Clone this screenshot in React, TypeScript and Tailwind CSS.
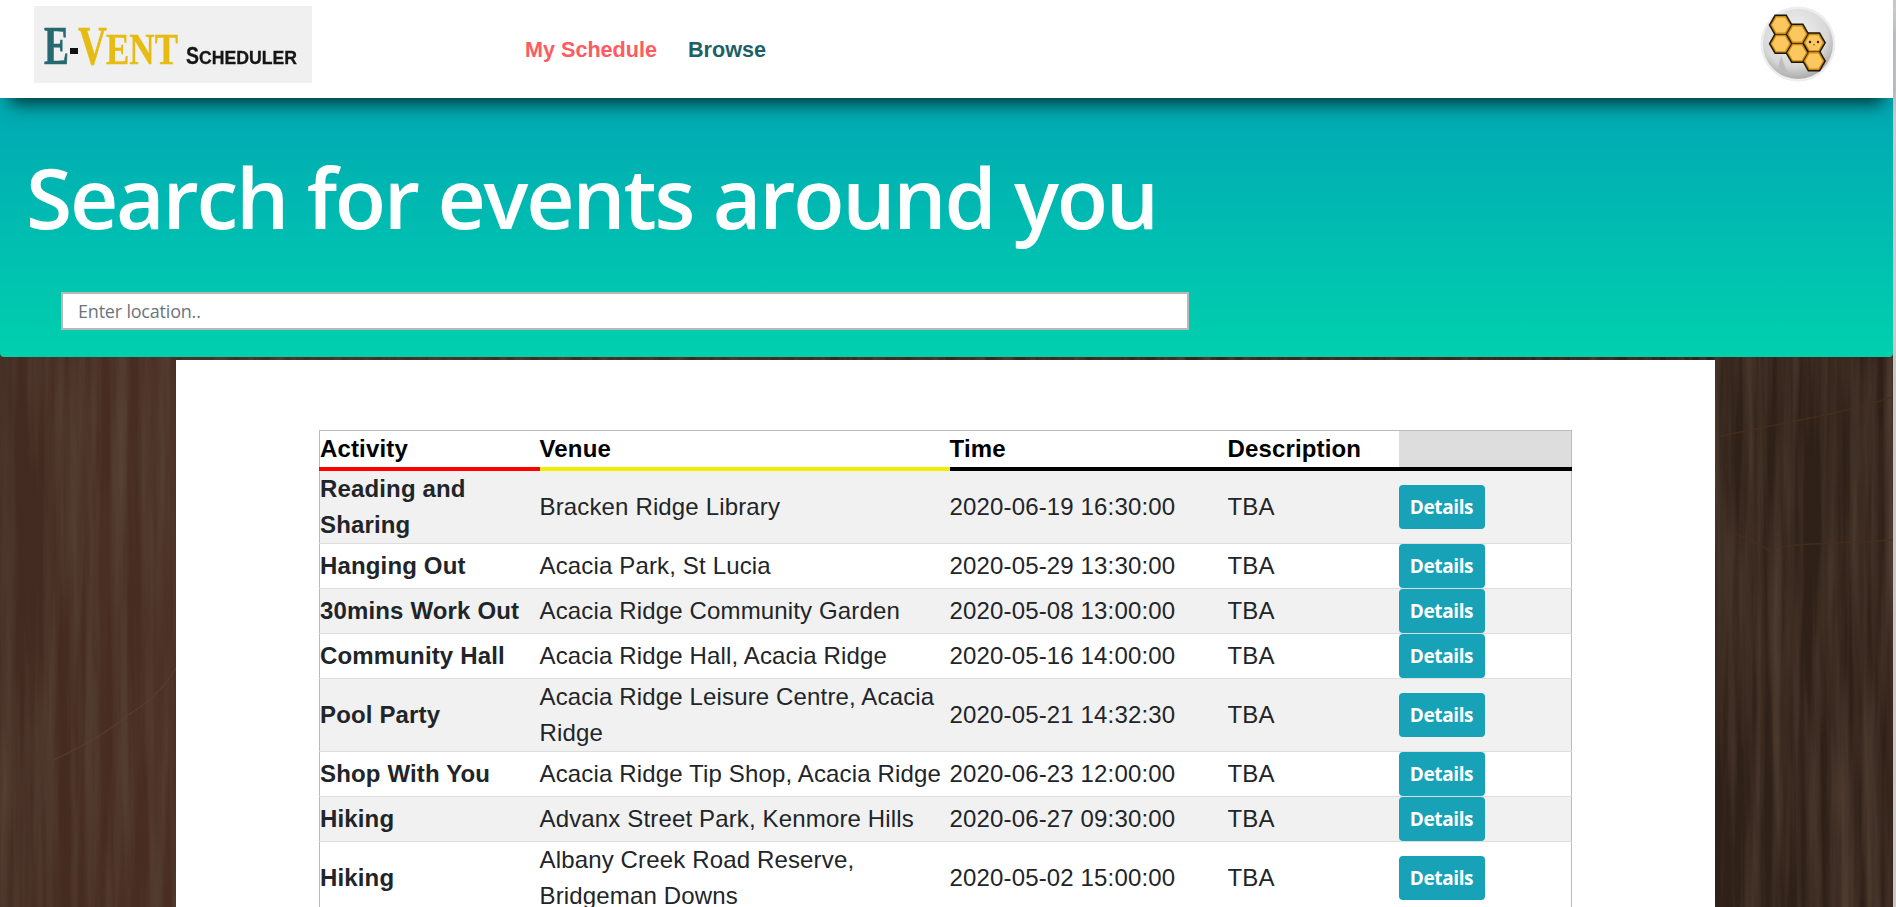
const rows: [string, string, string][] = [
  ["Reading and Sharing", "Bracken Ridge Library", "2020-06-19 16:30:00"],
  ["Hanging Out", "Acacia Park, St Lucia", "2020-05-29 13:30:00"],
  ["30mins Work Out", "Acacia Ridge Community Garden", "2020-05-08 13:00:00"],
  ["Community Hall", "Acacia Ridge Hall, Acacia Ridge", "2020-05-16 14:00:00"],
  ["Pool Party", "Acacia Ridge Leisure Centre, Acacia Ridge", "2020-05-21 14:32:30"],
  ["Shop With You", "Acacia Ridge Tip Shop, Acacia Ridge", "2020-06-23 12:00:00"],
  ["Hiking", "Advanx Street Park, Kenmore Hills", "2020-06-27 09:30:00"],
  ["Hiking", "Albany Creek Road Reserve, Bridgeman Downs", "2020-05-02 15:00:00"],
];

function Logo() {
  return (
    <svg width="278" height="77" viewBox="0 0 278 77" className="block bg-[#f0f0f0]">
      <g className="blur-[0.5px]">
        <text x="10" y="58" fontFamily="Liberation Serif" fontWeight="700" fontSize="54" fill="#266a70" stroke="#266a70" strokeWidth="0.7" textLength="25" lengthAdjust="spacingAndGlyphs">E</text>
        <rect x="36" y="42" width="8" height="6" fill="#111" />
        <text x="44" y="58" fontFamily="Liberation Serif" fontSize="54" fontWeight="700" fill="#e6bc12" stroke="#e6bc12" strokeWidth="0.4" textLength="29" lengthAdjust="spacingAndGlyphs">V</text>
        <text x="72" y="58" fontFamily="Liberation Serif" fontSize="45" fontWeight="700" fill="#e6bc12" stroke="#e6bc12" strokeWidth="0.4" textLength="72" lengthAdjust="spacingAndGlyphs">ENT</text>
        <text x="152" y="58" fontFamily="Liberation Sans" fontSize="23" fontWeight="700" fill="#161616" stroke="#161616" strokeWidth="0.3" textLength="13" lengthAdjust="spacingAndGlyphs">S</text>
        <text x="165" y="58" fontFamily="Liberation Sans" fontSize="18" fontWeight="700" fill="#161616" stroke="#161616" strokeWidth="0.3" textLength="98" lengthAdjust="spacingAndGlyphs">CHEDULER</text>
      </g>
    </svg>
  );
}

function Avatar() {
  const centers = [
    [20.7, 19],
    [37.3, 28],
    [54, 36.7],
    [20.7, 37.7],
    [37.3, 46.7],
    [54, 55],
  ];
  const hex = (cx: number, cy: number, r: number) =>
    [0, 60, 120, 180, 240, 300]
      .map((a) => `${cx + r * Math.cos((a * Math.PI) / 180)},${cy + r * Math.sin((a * Math.PI) / 180)}`)
      .join(" ");
  return (
    <svg width="76" height="76" viewBox="0 0 76 76" className="block">
      <defs>
        <radialGradient id="av" cx="0.45" cy="0.35" r="0.72">
          <stop offset="0" stopColor="#f2f2f2" />
          <stop offset="0.65" stopColor="#d8d8d8" />
          <stop offset="1" stopColor="#9a9a9a" />
        </radialGradient>
      </defs>
      <circle cx="38" cy="38" r="37.5" fill="#ededed" />
      <circle cx="38" cy="38" r="35" fill="url(#av)" />
      <path d="M17 66 L21 50 L28 68 Z" fill="#bdbdbd" />
      {centers.map(([x, y], i) => (
        <polygon key={"o" + i} points={hex(x, y, 12)} fill="#1c1608" />
      ))}
      {centers.map(([x, y], i) => (
        <polygon key={"m" + i} points={hex(x, y, 10.3)} fill="#c98a12" />
      ))}
      {centers.map(([x, y], i) => (
        <polygon key={"i" + i} points={hex(x, y, 8.7)} fill="#fdc75f" />
      ))}
      <circle cx="50" cy="36" r="1.2" fill="#222" />
      <circle cx="58" cy="36" r="1.2" fill="#222" />
      <path d="M53 38.5 q1 1 2 0" stroke="#222" strokeWidth="0.6" fill="none" />
    </svg>
  );
}

function Wood() {
  return (
    <svg className="absolute inset-0 h-full w-full" width="1893" height="554" viewBox="0 0 1893 554" preserveAspectRatio="none">
      <defs>
        <linearGradient id="wood" x1="0" x2="1" y1="0" y2="0">
          <stop offset="0" stopColor="#422a20" />
          <stop offset="0.093" stopColor="#492d22" />
          <stop offset="0.907" stopColor="#302118" />
          <stop offset="1" stopColor="#2f2017" />
        </linearGradient>
        <filter id="grain" x="0" y="0" width="100%" height="100%">
          <feTurbulence type="fractalNoise" baseFrequency="0.07 0.003" numOctaves="4" seed="23" />
          <feColorMatrix type="matrix" values="0 0 0 0 0.1  0 0 0 0 0.06  0 0 0 0 0.04  1.6 0 0 0 -0.55" />
        </filter>
      </defs>
      <rect width="1893" height="554" fill="url(#wood)" />
      <rect width="1893" height="554" filter="url(#grain)" />
      <path d="M54 407 C85 392 110 378 128 362 C145 352 165 335 176 315" fill="none" stroke="#5e3f2e" strokeWidth="1.5" opacity="0.7" />
      <g fill="none" stroke="#46301f" strokeWidth="1.5" opacity="0.7">
        <path d="M1717 84 C1770 72 1840 62 1893 44" />
        <path d="M1717 174 C1745 182 1765 195 1777 202" />
        <path d="M1777 194 C1810 190 1850 190 1893 187" />
      </g>
    </svg>
  );
}

export default function App() {
  return (
    <div className="flex h-[907px] w-[1896px] overflow-hidden bg-white font-['Liberation_Sans',Arial,sans-serif]">
      <div className="flex w-[1893px] shrink-0 flex-col">
        <header className="relative z-20 flex h-[98px] shrink-0 items-center bg-white pl-[34px] pr-[57px] shadow-[0_16px_16px_-10px_#02383c]">
          <div className="-mt-[10px]">
            <Logo />
          </div>
          <nav className="ml-[213px] mt-[2px] flex gap-[31px] text-[21.6px] font-bold">
            <span className="text-[#ff5a5f]">My Schedule</span>
            <span className="text-[#1f5f66]">Browse</span>
          </nav>
          <div className="ml-auto -mt-[11px]">
            <Avatar />
          </div>
        </header>
        <section className="relative z-10 h-[259px] shrink-0 rounded-b-[4px] bg-gradient-to-b from-[#00a8b3] to-[#00d0ad] pl-[26px]">
          <h1 className="pt-[41px] font-['Open_Sans',sans-serif] text-[84px] font-semibold leading-[116px] tracking-[-2.25px] text-white">
            Search for events around you
          </h1>
          <div className="ml-[35px] mt-[37px] w-[1128px]">
            <input
              readOnly
              placeholder="Enter location.."
              className="block h-[38px] w-full border-2 border-[#b8b8b8] bg-white px-[15px] font-['Open_Sans',sans-serif] text-[18px] tracking-[-0.2px] text-[#495057] outline-none placeholder:text-[#6c757d]"
            />
          </div>
        </section>
        <main className="relative -mt-[4px] min-h-0 flex-1 overflow-hidden pt-[7px]">
          <Wood />
          <div className="relative ml-[176px] h-full w-[1539px] bg-white pl-[143px] pt-[70px]">
            <table className="w-[1252px] table-fixed border-collapse border border-[#bbbbbb] text-[24px] leading-[36px] tracking-[0.15px] text-[#212529]">
              <colgroup>
                <col className="w-[220px]" />
                <col className="w-[410px]" />
                <col className="w-[278px]" />
                <col className="w-[171px]" />
                <col className="w-[173px]" />
              </colgroup>
              <thead>
                <tr className="text-left text-black">
                  <th className="h-[37px] border-b-4 border-[#ff0000] p-0 font-bold">Activity</th>
                  <th className="border-b-4 border-[#eeee00] p-0 font-bold">Venue</th>
                  <th className="border-b-4 border-black p-0 font-bold">Time</th>
                  <th className="border-b-4 border-black p-0 font-bold">Description</th>
                  <th className="border-b-4 border-black bg-[#dddddd] p-0"></th>
                </tr>
              </thead>
              <tbody>
                {rows.map(([a, v, t], i) => (
                  <tr key={i} className={(i % 2 === 0 ? "bg-[#f1f1f1] " : "bg-white ") + "border-b border-[#dddddd]"}>
                    <td className="p-0 align-middle font-bold">{a}</td>
                    <td className="p-0 align-middle">{v}</td>
                    <td className="p-0 align-middle">{t}</td>
                    <td className="p-0 align-middle">TBA</td>
                    <td className="p-0 align-middle">
                      <button className="block h-[44px] w-[86px] rounded-[4px] bg-[#17a2b8] text-center font-['Open_Sans',sans-serif] text-[19px] font-bold leading-[44px] tracking-[-0.4px] text-white">
                        Details
                      </button>
                    </td>
                  </tr>
                ))}
              </tbody>
            </table>
          </div>
        </main>
      </div>
      <div className="w-[3px] shrink-0 bg-[#c8c8c8]" />
    </div>
  );
}
